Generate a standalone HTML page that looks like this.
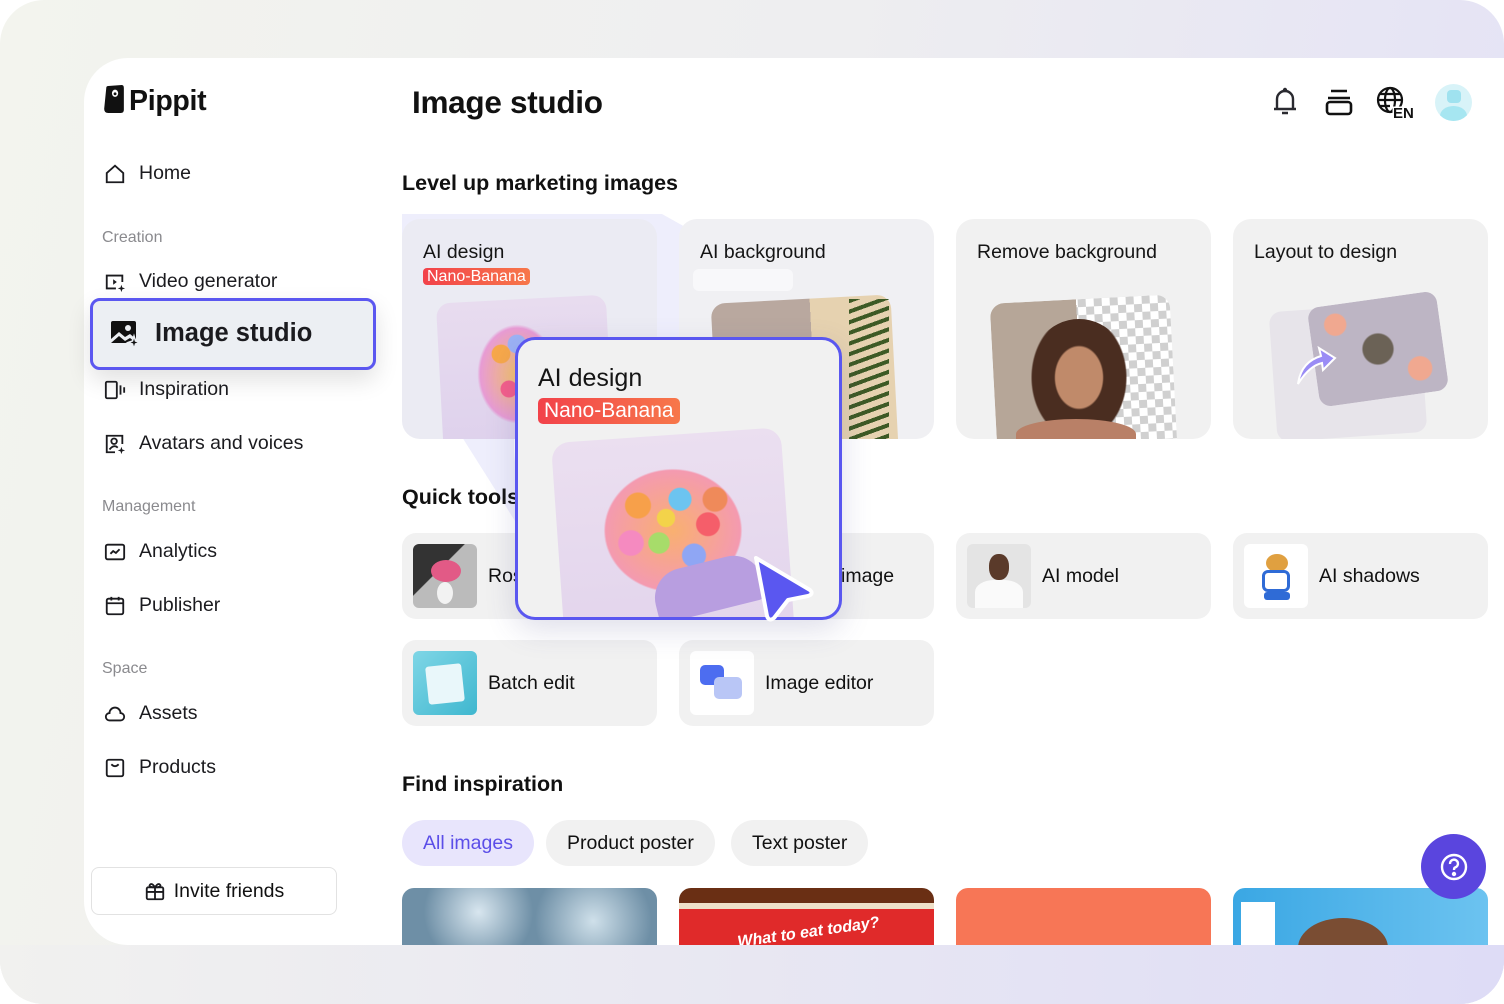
<!DOCTYPE html>
<html><head><meta charset="utf-8"><style>
*{margin:0;padding:0;box-sizing:border-box}
body{width:1504px;height:1004px;overflow:hidden;font-family:"Liberation Sans",sans-serif;color:#111;background:#fff}
.bg{position:absolute;inset:0;border-radius:44px;background:linear-gradient(100deg,#f3f4ee 0%,#eeeef0 50%,#e3e1f6 100%);overflow:hidden}
.panel{position:absolute;left:84px;top:58px;width:1440px;height:887px;background:#fff;border-radius:44px 0 0 44px;overflow:hidden}
.bottom{position:absolute;left:0;top:945px;width:1504px;height:59px;background:linear-gradient(90deg,#f1f1ef,#e6e5f3 60%,#dedcf6);border-radius:0 0 44px 44px}
.a{position:absolute}
.nav{position:absolute;left:104px;font-size:19.5px;color:#1b1b1f;display:flex;align-items:center;gap:13px}
.nav svg{width:22px;height:22px;fill:none;stroke:#1b1b1f;stroke-width:2}
.sec{position:absolute;left:102px;font-size:16px;color:#8a8a8e}
.h2{position:absolute;left:402px;font-size:21.5px;font-weight:bold;color:#111}
.card{position:absolute;top:219px;width:255px;height:220px;background:#f1f1f1;border-radius:18px;overflow:hidden}
.card .t{position:absolute;left:21px;top:22px;font-size:19.5px;color:#151515}
.badge{background:linear-gradient(90deg,#f2424a,#f7774a);color:#fff;border-radius:4px;padding:0 4px}
.q{position:absolute;width:255px;height:86px;background:#f1f1f1;border-radius:14px}
.q .th{position:absolute;left:11px;top:11px;width:64px;height:64px;border-radius:6px;overflow:hidden}
.q .l{position:absolute;left:86px;top:32px;font-size:19.5px}
.chip{position:absolute;top:820px;height:46px;border-radius:23px;background:#f1f1f1;font-size:19.5px;line-height:46px;padding:0 21px}
.img{position:absolute;top:888px;width:255px;height:60px;border-radius:12px 12px 0 0;overflow:hidden}
</style></head><body>
<div class="bg"></div>
<div class="panel"></div>
<div class="bottom"></div>

<!-- logo -->
<svg class="a" style="left:103px;top:85px" width="21" height="29" viewBox="0 0 20 28"><path d="M3 3 Q3 1 5 1 L18 0 Q20 0 20 3 L20 24 Q20 27 17 27 L5 27 Q1 27 1 23 Z" fill="#111"/><ellipse cx="11.5" cy="8" rx="3" ry="3.5" fill="#fff"/><circle cx="11.5" cy="8.5" r="1.4" fill="#111"/></svg>
<div class="a" style="left:129px;top:85px;font-size:28.5px;font-weight:bold;letter-spacing:-0.3px">Pippit</div>

<div class="nav" style="top:162px"><svg viewBox="0 0 24 24"><path d="M3 11 L12 3 L21 11 V21 H3 Z"/></svg>Home</div>
<div class="sec" style="top:229px">Creation</div>
<div class="nav" style="top:270px"><svg viewBox="0 0 24 24"><path d="M20 12 V5 H3 V19 H13"/><path d="M10 9 L14 12 L10 15 Z" fill="#1b1b1f" stroke="none"/><path d="M19 15 L20 18 L23 19 L20 20 L19 23 L18 20 L15 19 L18 18 Z" fill="#1b1b1f" stroke="none"/></svg>Video generator</div>
<div class="a" style="left:90px;top:298px;width:286px;height:72px;border:3px solid #5b57f0;border-radius:10px;background:#eceff3;box-shadow:0 10px 24px rgba(0,0,0,.12)"></div>
<svg class="a" style="left:110px;top:320px" width="30" height="30" viewBox="0 0 30 30"><rect x="1" y="1" width="25" height="22" rx="2" fill="#111"/><path d="M1 19 L9 12 L15 17 L20 14 L26 19 V23 H1Z" fill="#eceff3"/><path d="M1 23 L9 16 L15 21 L20 18 L26 23Z" fill="#111"/><circle cx="18" cy="8" r="3" fill="#eceff3"/><path d="M24 16 L25.5 21 L30 22.5 L25.5 24 L24 29 L22.5 24 L18 22.5 L22.5 21 Z" fill="#111" stroke="#eceff3" stroke-width="1.5"/></svg>
<div class="a" style="left:155px;top:319px;font-size:25.5px;font-weight:bold;color:#1b1b1f">Image studio</div>
<div class="nav" style="top:378px"><svg viewBox="0 0 24 24"><rect x="2" y="3" width="12" height="18" rx="1.5"/><path d="M18 7 V17 M22 9 V15"/></svg>Inspiration</div>
<div class="nav" style="top:432px"><svg viewBox="0 0 24 24"><path d="M20 12 V3 H3 V21 H12"/><circle cx="11" cy="9" r="3"/><path d="M6 18 Q11 12 15 16"/><path d="M19 15 L20 18 L23 19 L20 20 L19 23 L18 20 L15 19 L18 18 Z" fill="#1b1b1f" stroke="none"/></svg>Avatars and voices</div>
<div class="sec" style="top:498px">Management</div>
<div class="nav" style="top:540px"><svg viewBox="0 0 24 24"><rect x="2" y="4" width="20" height="16" rx="2"/><path d="M7 14 L10 11 L13 13 L17 9"/></svg>Analytics</div>
<div class="nav" style="top:594px"><svg viewBox="0 0 24 24"><rect x="3" y="4" width="18" height="17" rx="2"/><path d="M3 9 H21 M8 2 V6 M16 2 V6"/></svg>Publisher</div>
<div class="sec" style="top:660px">Space</div>
<div class="nav" style="top:702px"><svg viewBox="0 0 24 24"><path d="M6 19 H18 A4 4 0 0 0 18 11 A6 6 0 0 0 6 11 A4 4 0 0 0 6 19 Z"/></svg>Assets</div>
<div class="nav" style="top:756px"><svg viewBox="0 0 24 24"><rect x="3" y="3" width="18" height="18" rx="2"/><path d="M8 8 Q12 12 16 8"/></svg>Products</div>
<div class="a" style="left:91px;top:867px;width:246px;height:48px;border:1px solid #e2e2e2;border-radius:8px;font-size:19.5px;display:flex;align-items:center;justify-content:center;gap:8px"><svg width="22" height="22" viewBox="0 0 24 24" fill="none" stroke="#1b1b1f" stroke-width="2"><rect x="3" y="8" width="18" height="13" rx="1.5"/><path d="M3 13 H21 M12 8 V21 M12 8 Q8 2 6 6 Q6 8 12 8 Q16 2 18 6 Q18 8 12 8"/></svg>Invite friends</div>

<div class="a" style="left:412px;top:84px;font-size:31.5px;font-weight:bold;letter-spacing:-0.3px">Image studio</div>
<!-- header icons -->
<svg class="a" style="left:1270px;top:86px" width="30" height="30" viewBox="0 0 30 30" fill="none" stroke="#2a2a30" stroke-width="2.4"><path d="M7 23 V13 A8 8 0 0 1 23 13 V23 M4 23 H26 M12 27 H18"/><circle cx="15" cy="4" r="1" fill="#2a2a30"/></svg>
<svg class="a" style="left:1324px;top:88px" width="30" height="28" viewBox="0 0 30 28" fill="none" stroke="#111" stroke-width="2.6"><path d="M7 3 H23 M4 10 H26"/><rect x="3" y="14" width="24" height="12" rx="3"/></svg>
<svg class="a" style="left:1376px;top:86px" width="40" height="34" viewBox="0 0 40 34" fill="none" stroke="#111" stroke-width="2.2"><circle cx="14" cy="14" r="12"/><ellipse cx="14" cy="14" rx="5" ry="12"/><path d="M2 14 H26 M4 8 H24 M4 20 H14"/><text x="17" y="32" font-family="Liberation Sans" font-weight="bold" font-size="15" fill="#111" stroke="#fff" stroke-width="3" paint-order="stroke">EN</text></svg>
<div class="a" style="left:1435px;top:84px;width:37px;height:37px;border-radius:50%;background:#d8f3f8;overflow:hidden"><div class="a" style="left:12px;top:6px;width:14px;height:13px;border-radius:4px;background:#9fe2ef"></div><div class="a" style="left:5px;top:22px;width:27px;height:20px;border-radius:50%;background:#a6e6f1"></div></div>

<div class="h2" style="top:171px">Level up marketing images</div>
<!-- lavender beam (behind cards) -->
<svg class="a" style="left:402px;top:212px" width="440" height="410"><path d="M260 2 L310 30 L300 128 L112 128 L112 240 L120 320 L0 130 L0 2Z" fill="#eeeefc"/></svg>
<!-- cards -->
<div class="card" style="left:402px;background:#ebebf3"><div class="t">AI design<br><span class="badge" style="font-size:16px">Nano-Banana</span></div>
<div class="a" style="left:38px;top:80px;width:170px;height:160px;border-radius:14px;background:linear-gradient(#e8dcef,#ddd0ec);transform:rotate(-3deg)"></div>
<div class="a" style="left:75px;top:105px;width:80px;height:100px;border-radius:50%;background:radial-gradient(circle at 30% 30%,#f7a84a 0 10%,transparent 11%),radial-gradient(circle at 60% 40%,#6cc4f0 0 10%,transparent 11%),radial-gradient(circle at 40% 65%,#f55e8a 0 10%,transparent 11%),radial-gradient(circle at 70% 70%,#a7dc6a 0 10%,transparent 11%),radial-gradient(circle at 50% 20%,#9cb2f5 0 10%,transparent 11%),radial-gradient(#f7c46a,#e79bd4 65%,transparent 70%)"></div></div>
<div class="card" style="left:679px;background:#f0f0f3"><div class="t">AI background</div><div class="a" style="left:14px;top:50px;width:100px;height:22px;background:#f8f8fa;border-radius:6px"></div>
<div class="a" style="left:36px;top:80px;width:180px;height:170px;border-radius:14px;background:linear-gradient(90deg,#b9a89f 0 55%,#e6d2b0 55%);transform:rotate(-3deg)"></div>
<div class="a" style="left:170px;top:80px;width:40px;height:140px;background:repeating-linear-gradient(160deg,#3d5a25 0 4px,transparent 4px 10px)"></div></div>
<div class="card" style="left:956px"><div class="t">Remove background</div>
<div class="a" style="left:38px;top:80px;width:180px;height:170px;border-radius:14px;background:linear-gradient(90deg,#b6a698 0 48%,transparent 48%),repeating-conic-gradient(#d0d0d0 0 25%,#fff 0 50%) 0 0/16px 16px;transform:rotate(-3deg)"></div>
<div class="a" style="left:68px;top:100px;width:110px;height:130px;border-radius:50% 50% 20% 20%;background:radial-gradient(ellipse at 50% 45%,#c08a6a 0 30%,#4a2d20 32% 60%,transparent 62%)"></div>
<div class="a" style="left:60px;top:200px;width:120px;height:30px;border-radius:50% 50% 0 0;background:#b98067"></div></div>
<div class="card" style="left:1233px"><div class="t">Layout to design</div>
<div class="a" style="left:40px;top:88px;width:150px;height:130px;border-radius:12px;background:#e7e4ea;transform:rotate(-4deg)"></div>
<div class="a" style="left:80px;top:80px;width:130px;height:100px;border-radius:12px;background:radial-gradient(circle at 20% 20%,#f0a890 0 8%,transparent 9%),radial-gradient(circle at 80% 75%,#f0a890 0 9%,transparent 10%),radial-gradient(circle at 50% 50%,#6b6256 0 18%,transparent 20%),#bdb5c4;transform:rotate(-8deg)"></div>
<svg class="a" style="left:60px;top:125px" width="45" height="45" viewBox="0 0 45 45"><path d="M5 40 Q8 18 28 12 L26 4 L42 14 L30 26 L29 19 Q16 22 5 40Z" fill="#9a8cf5" stroke="#fff" stroke-width="2"/></svg></div>

<div class="h2" style="top:485px">Quick tools</div>
<div class="q" style="left:402px;top:533px"><div class="th" style="background:linear-gradient(135deg,#333 40%,#bbb 41%)"><div class="a" style="left:18px;top:16px;width:30px;height:22px;border-radius:50%;background:#e25a86"></div><div class="a" style="left:24px;top:38px;width:16px;height:22px;border-radius:50%;background:#f2f2f2"></div></div><div class="l">Rose</div></div>
<div class="q" style="left:679px;top:533px"><div class="l" style="left:162px">image</div></div>
<div class="q" style="left:956px;top:533px"><div class="th" style="background:#e4e4e4"><div class="a" style="left:22px;top:10px;width:20px;height:26px;border-radius:45%;background:#5a3a2a"></div><div class="a" style="left:8px;top:36px;width:48px;height:30px;border-radius:40% 40% 0 0;background:#fafafa"></div></div><div class="l">AI model</div></div>
<div class="q" style="left:1233px;top:533px"><div class="th" style="background:#fff"><div class="a" style="left:22px;top:10px;width:22px;height:18px;border-radius:50%;background:#e0a040"></div><div class="a" style="left:18px;top:26px;width:28px;height:22px;border-radius:6px;background:#fff;border:3px solid #2f6bd6"></div><div class="a" style="left:20px;top:48px;width:26px;height:8px;background:#2f6bd6;border-radius:3px"></div></div><div class="l">AI shadows</div></div>
<div class="q" style="left:402px;top:640px"><div class="th" style="background:linear-gradient(135deg,#7fd6e6,#3fb7cf)"><div class="a" style="left:14px;top:14px;width:36px;height:38px;background:#e9f7fa;border-radius:3px;transform:rotate(-6deg)"></div></div><div class="l">Batch edit</div></div>
<div class="q" style="left:679px;top:640px"><div class="th" style="background:#fff"><div class="a" style="left:10px;top:14px;width:24px;height:20px;border-radius:5px;background:#4d6df0"></div><div class="a" style="left:24px;top:26px;width:28px;height:22px;border-radius:5px;background:#b9c6f6"></div></div><div class="l">Image editor</div></div>

<!-- popup -->
<div class="a" style="left:515px;top:337px;width:327px;height:283px;border:3px solid #5a57f0;border-radius:20px;background:#f1f1f1;overflow:hidden;box-shadow:0 10px 30px rgba(80,80,140,.18)">
<div class="a" style="left:20px;top:24px;font-size:25px;color:#151515">AI design</div>
<div class="a" style="left:20px;top:58px;font-size:21px;color:#fff;background:linear-gradient(90deg,#f2424a,#f7774a);border-radius:5px;padding:1px 6px">Nano-Banana</div>
<div class="a" style="left:40px;top:95px;width:230px;height:210px;border-radius:18px;background:linear-gradient(#ebdff0,#e2d4ec);transform:rotate(-4deg)"></div>
<div class="a" style="left:85px;top:128px;width:140px;height:125px;border-radius:50%;background:radial-gradient(circle at 25% 30%,#f7a04a 0 9%,transparent 10%),radial-gradient(circle at 55% 25%,#6cc4f0 0 9%,transparent 10%),radial-gradient(circle at 75% 45%,#f55e6a 0 9%,transparent 10%),radial-gradient(circle at 40% 60%,#a7dc6a 0 9%,transparent 10%),radial-gradient(circle at 65% 70%,#8fa6f4 0 9%,transparent 10%),radial-gradient(circle at 20% 60%,#f58ac0 0 9%,transparent 10%),radial-gradient(circle at 45% 40%,#f3d34a 0 8%,transparent 9%),radial-gradient(circle at 80% 25%,#ef8a5a 0 8%,transparent 9%),radial-gradient(#f9b070,#f49ab0 68%,transparent 70%)"></div>
<div class="a" style="left:135px;top:222px;width:110px;height:50px;border-radius:30px 30px 8px 8px;background:#b89ee0;transform:rotate(-14deg)"></div>
</div>
<svg class="a" style="left:748px;top:552px" width="70" height="72" viewBox="0 0 70 72"><path d="M8 6 L62 38 Q66 42 60 44 L40 48 L26 66 Q21 70 19 64 Z" fill="#5a57f0" stroke="#fff" stroke-width="4" stroke-linejoin="round"/></svg>

<div class="h2" style="top:772px">Find inspiration</div>
<div class="chip" style="left:402px;background:#e8e5fc;color:#5b4ee8">All images</div>
<div class="chip" style="left:546px">Product poster</div>
<div class="chip" style="left:731px">Text poster</div>
<div class="img" style="left:402px;background:radial-gradient(circle at 30% 40%,#d8e6ef,transparent 30%),radial-gradient(circle at 75% 55%,#cfe0ea,transparent 30%),#6e8fa6"></div>
<div class="img" style="left:679px;background:linear-gradient(#6a2f14 0 25%,#efe0c8 25% 35%,#e02a2a 35%)"><div class="a" style="left:58px;top:36px;color:#fff;font-style:italic;font-weight:bold;font-size:16px;transform:rotate(-8deg)">What to eat today?</div></div>
<div class="img" style="left:956px;background:#f77656"></div>
<div class="img" style="left:1233px;background:linear-gradient(90deg,#3aa7e4,#6cc3f0)"><div class="a" style="left:8px;top:14px;width:34px;height:46px;background:#fff"></div><div class="a" style="left:65px;top:30px;width:90px;height:60px;border-radius:50%;background:#7a4d33"></div></div>
<div class="bottom"></div>
<div class="a" style="left:1421px;top:834px;width:65px;height:65px;border-radius:50%;background:#5a45de;display:flex;align-items:center;justify-content:center"><svg width="30" height="30" viewBox="0 0 30 30" fill="none" stroke="#fff" stroke-width="2.4"><circle cx="15" cy="15" r="12"/><path d="M11 12 A4 4 0 1 1 16 15.5 Q15 16 15 18"/><circle cx="15" cy="22" r="1" fill="#fff"/></svg></div>
</body></html>
